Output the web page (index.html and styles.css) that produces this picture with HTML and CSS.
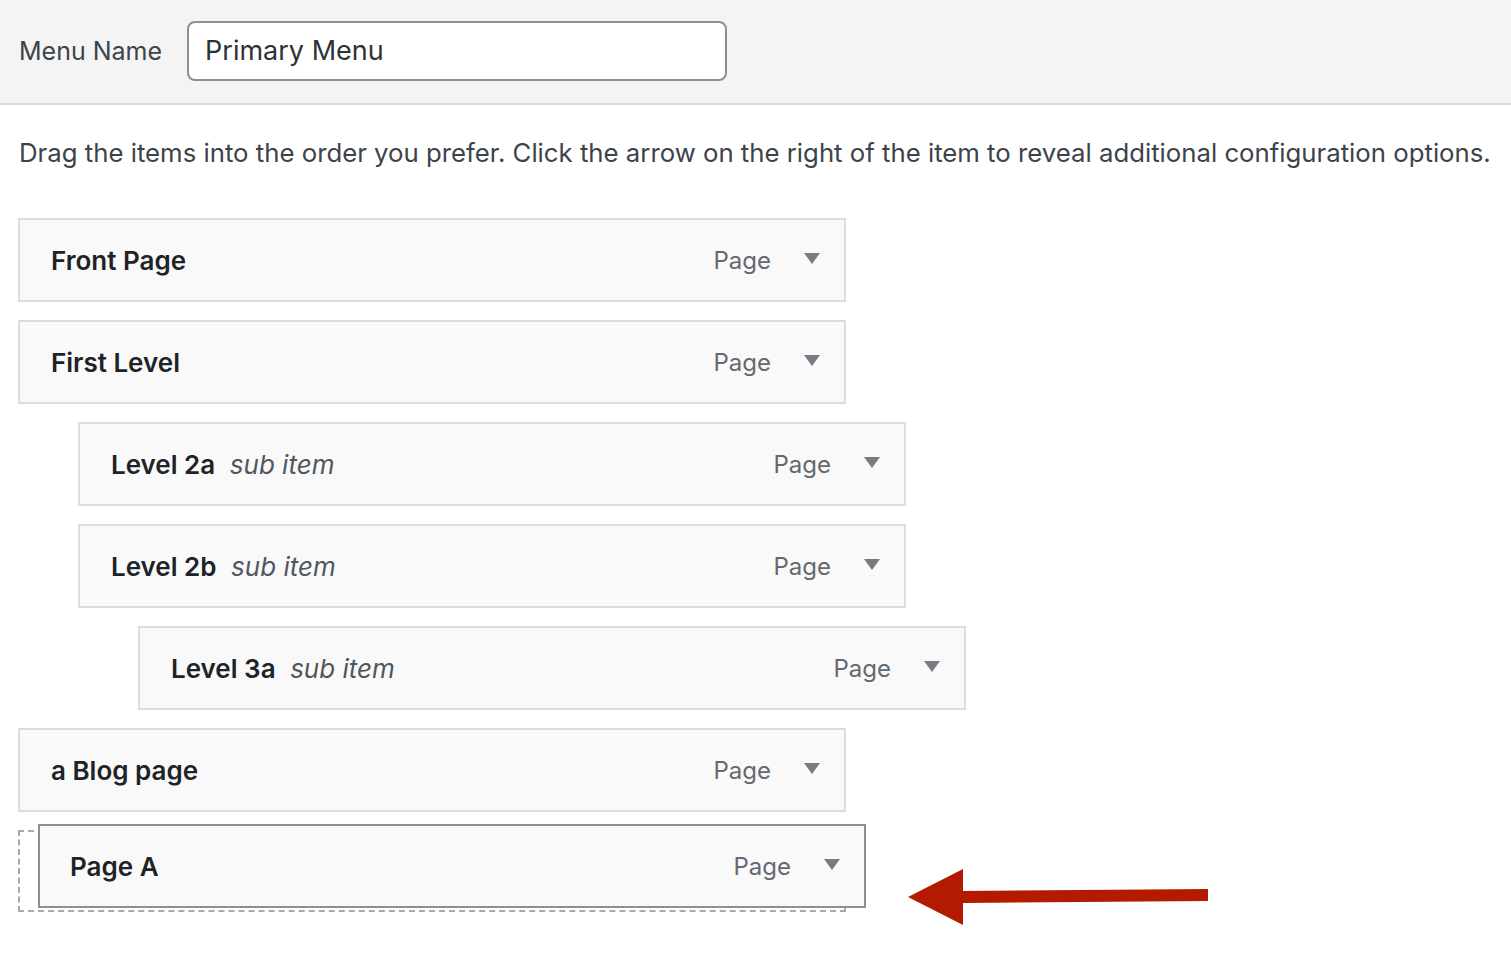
FILE: index.html
```html
<!DOCTYPE html>
<html lang="en">
<head>
<meta charset="utf-8">
<title>Menu Structure</title>
<link rel="stylesheet" href="styles.css">
</head>
<body>
<div class="header">
  <label class="label" for="menu-name">Menu Name</label>
  <input class="name-input" id="menu-name" type="text" value="Primary Menu">
</div>
<p class="desc">Drag the items into the order you prefer. Click the arrow on the right of the item to reveal additional configuration options.</p>
<ul class="menu">
  <li class="item depth-0"><span class="title">Front Page</span><span class="type">Page</span><span class="toggle"></span></li>
  <li class="item depth-0"><span class="title">First Level</span><span class="type">Page</span><span class="toggle"></span></li>
  <li class="item depth-1"><span class="title">Level 2a <em class="sub">sub item</em></span><span class="type">Page</span><span class="toggle"></span></li>
  <li class="item depth-1"><span class="title">Level 2b <em class="sub">sub item</em></span><span class="type">Page</span><span class="toggle"></span></li>
  <li class="item depth-2"><span class="title">Level 3a <em class="sub">sub item</em></span><span class="type">Page</span><span class="toggle"></span></li>
  <li class="item depth-0"><span class="title">a Blog page</span><span class="type">Page</span><span class="toggle"></span></li>
  <li class="placeholder">
    <div class="item dragging"><span class="title">Page A</span><span class="type">Page</span><span class="toggle"></span></div>
  </li>
</ul>
<svg class="arrow" width="310" height="60" viewBox="0 0 310 60" aria-hidden="true">
  <polygon points="0,28 55,0 55,22 300,20 300,32 55,34 55,56" fill="#b41a00"/>
</svg>
</body>
</html>
```
FILE: styles.css
```css
* { box-sizing: border-box; }
html, body { min-height: 969px; }
body {
  margin: 0;
  font-family: Inter, "Noto Sans", sans-serif;
  color: #1d2327;
  background: #fff;
  position: relative;
}
.header {
  height: 105px;
  background: #f4f4f4;
  border-bottom: 2px solid #dcdcde;
  display: flex;
  align-items: center;
  padding: 0 19px 2px;
  gap: 25px;
}
.label {
  font-size: 25px;
  color: #3c434a;
}
.name-input {
  width: 540px;
  height: 60px;
  border: 2px solid #8c8f94;
  border-radius: 8px;
  background: #fff;
  font-family: inherit;
  font-size: 27px;
  color: #2c3338;
  padding: 0 16px;
  outline: none;
}
.desc {
  margin: 30px 0 0 19px;
  font-size: 25.75px;
  line-height: 36px;
  color: #3c434a;
  white-space: nowrap;
}
.menu {
  list-style: none;
  margin: 47px 0 0 18px;
  padding: 0 0 40px;
  display: flex;
  flex-direction: column;
  gap: 18px;
}
.item {
  width: 828px;
  height: 84px;
  border: 2px solid #dcdcde;
  background: #f9f9f9;
  display: flex;
  align-items: center;
  padding: 0 24px 0 31px;
}
.depth-1 { margin-left: 60px; }
.depth-2 { margin-left: 120px; }
.title {
  flex: 1;
  font-size: 26px;
  font-weight: 600;
  color: #1d2327;
}
.sub {
  font-weight: 400;
  color: #50575e;
  margin-left: 8px;
}
.type {
  font-size: 24px;
  color: #646970;
  margin-right: 33px;
}
.toggle {
  width: 0;
  height: 0;
  border-left: 8px solid transparent;
  border-right: 8px solid transparent;
  border-top: 11px solid #787c82;
  margin-top: -4px;
}
.placeholder {
  position: relative;
  width: 828px;
  height: 82px;
  border: 2px dashed #a7aaad;
}
.dragging {
  position: absolute;
  left: 18px;
  top: -8px;
  border-color: #8c8f94;
  padding-left: 30px;
}
.arrow {
  position: absolute;
  left: 908px;
  top: 869px;
}
```
